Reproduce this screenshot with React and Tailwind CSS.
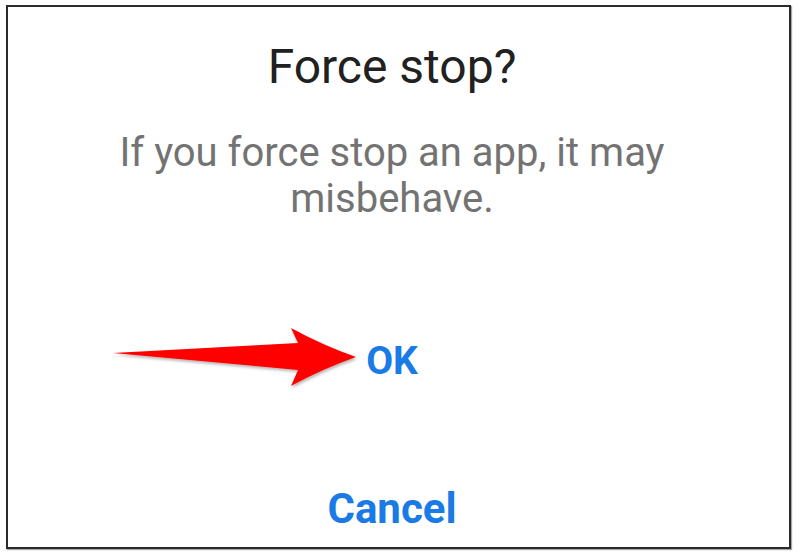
import React from 'react';

function Arrow() {
    return (
        <svg className="absolute left-0 top-0 pointer-events-none" width="800" height="557" viewBox="0 0 800 557">
            <defs>
                <filter id="shade" x="-10%" y="-30%" width="120%" height="160%">
                    <feDropShadow dx="1" dy="2" stdDeviation="1.5" floodColor="#000" floodOpacity="0.3" />
                </filter>
            </defs>
            <path
                d="M113 353 L298 343 L291 328 Q322 345 356 357 Q322 369 291 386 L298 370 Z"
                fill="#ff0000"
                filter="url(#shade)"
            />
        </svg>
    );
}

export default function App() {
    return (
        <div className="relative w-[800px] h-[557px] bg-white pt-[5px] pl-[6px] pr-[9px] pb-[8px]" style={{ fontFamily: 'Roboto, "Noto Sans", sans-serif' }}>
            <div className="h-full border-2 border-[#2b2b2b] shadow-[1px_1px_1px_rgba(0,0,0,0.35)] flex flex-col items-center pr-[13px]">
                <h1 className="mt-[32px] text-[48px] leading-[56px] text-[#212121] font-normal">Force stop?</h1>
                <p className="mt-[35px] text-[40px] leading-[46px] text-[#737373] text-center">
                    If you force stop an app, it may<br />misbehave.
                </p>
                <button className="mt-[120px] text-[39px] leading-[39px] font-bold text-[#1a7ae6]">OK</button>
                <button className="mt-[107px] text-[42px] leading-[42px] font-bold text-[#1a7ae6]">Cancel</button>
            </div>
            <Arrow />
        </div>
    );
}
